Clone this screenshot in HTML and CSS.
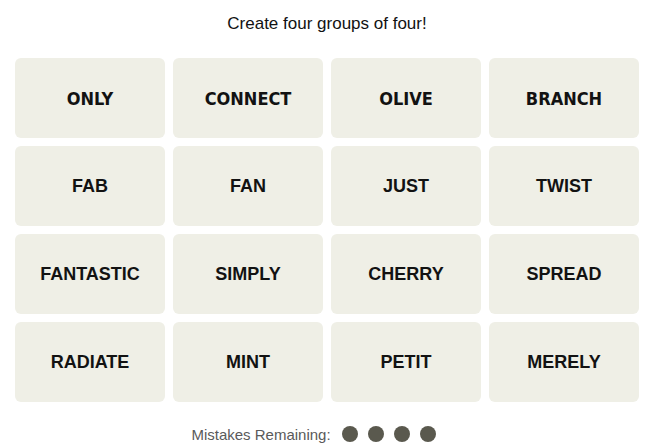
FILE: index.html
```html
<!DOCTYPE html>
<html>
<head>
<meta charset="utf-8">
<link rel="stylesheet" href="styles.css">
</head>
<body>
<main class="game">
  <h2 class="title">Create four groups of four!</h2>
  <section class="board">
    <div class="tile cond">ONLY</div>
    <div class="tile cond">CONNECT</div>
    <div class="tile cond">OLIVE</div>
    <div class="tile cond">BRANCH</div>
    <div class="tile">FAB</div>
    <div class="tile">FAN</div>
    <div class="tile">JUST</div>
    <div class="tile">TWIST</div>
    <div class="tile">FANTASTIC</div>
    <div class="tile">SIMPLY</div>
    <div class="tile">CHERRY</div>
    <div class="tile">SPREAD</div>
    <div class="tile">RADIATE</div>
    <div class="tile">MINT</div>
    <div class="tile">PETIT</div>
    <div class="tile">MERELY</div>
  </section>
  <div class="mistakes">
    <span class="label">Mistakes Remaining:</span>
    <span class="dots">
      <span class="dot"></span><span class="dot"></span><span class="dot"></span><span class="dot"></span>
    </span>
  </div>
</main>
</body>
</html>
```
FILE: styles.css
```css
html, body {
  margin: 0;
  padding: 0;
  background: #ffffff;
}
.game {
  width: 624px;
  padding-left: 15px;
  font-family: "Liberation Sans", Arial, sans-serif;
}
.title {
  margin: 0;
  height: 48px;
  display: flex;
  align-items: center;
  justify-content: center;
  font-size: 17px;
  font-weight: 400;
  color: #121212;
}
.board {
  margin-top: 10px;
  display: grid;
  grid-template-columns: repeat(4, 150px);
  grid-auto-rows: 80px;
  gap: 8px;
}
.tile {
  background: #efefe6;
  border-radius: 6px;
  display: flex;
  align-items: center;
  justify-content: center;
  font-size: 18px;
  font-weight: 700;
  color: #121212;
  text-transform: uppercase;
}
.tile.cond {
  font-family: "DejaVu Sans Condensed", "DejaVu Sans", sans-serif;
  font-stretch: condensed;
}
.mistakes {
  margin-top: 22px;
  height: 20px;
  display: flex;
  align-items: center;
  justify-content: center;
  padding-right: 27px;
  gap: 11px;
  font-size: 15px;
  color: #5a5a5a;
}
.dots {
  display: flex;
  gap: 10px;
}
.dot {
  width: 16px;
  height: 16px;
  border-radius: 50%;
  background: #5a594e;
}
```
